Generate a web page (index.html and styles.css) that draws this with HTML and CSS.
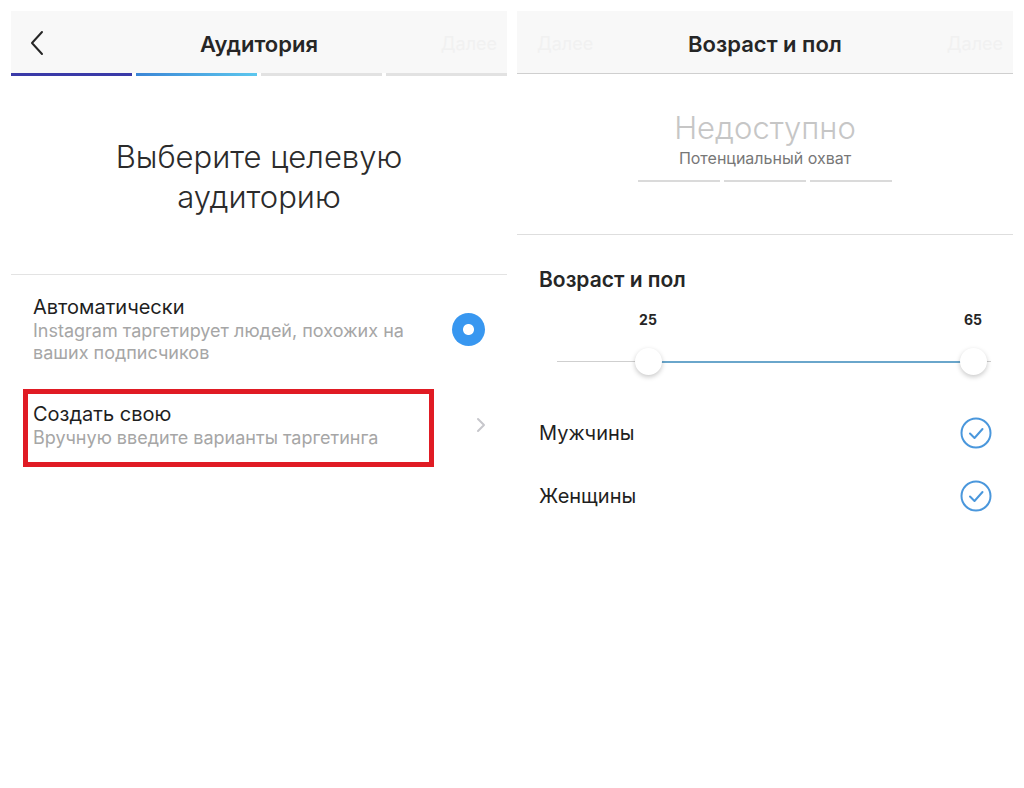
FILE: index.html
```html
<!DOCTYPE html>
<html lang="ru">
<head>
    <meta charset="UTF-8">
    <title>Аудитория</title>
    <link rel="stylesheet" href="styles.css">
</head>
<body>
    <div class="screens">
        <section class="screen">
            <header class="topbar">
                <span class="back">
                    <svg width="16" height="26" viewBox="0 0 16 26"><path d="M13 2 L3 13 L13 24" fill="none" stroke="#262626" stroke-width="2" stroke-linecap="round" stroke-linejoin="round"/></svg>
                </span>
                <h1>Аудитория</h1>
                <span class="ghost">Далее</span>
            </header>
            <div class="steps">
                <span class="step step-done"></span>
                <span class="step step-active"></span>
                <span class="step"></span>
                <span class="step"></span>
            </div>

            <h2 class="choose">Выберите целевую<br>аудиторию</h2>

            <div class="option">
                <div class="option-text">
                    <div class="option-title">Автоматически</div>
                    <div class="option-sub">Instagram таргетирует людей, похожих на ваших подписчиков</div>
                </div>
                <span class="radio"></span>
            </div>
            <div class="option option-custom">
                <div class="option-text highlight">
                    <div class="option-title">Создать свою</div>
                    <div class="option-sub">Вручную введите варианты таргетинга</div>
                </div>
                <svg class="chevron" width="10" height="16" viewBox="0 0 10 16"><path d="M2 2 L8 8 L2 14" fill="none" stroke="#c7c7cc" stroke-width="2" stroke-linecap="round" stroke-linejoin="round"/></svg>
            </div>
        </section>

        <section class="screen">
            <header class="topbar topbar-plain">
                <span class="ghost ghost-left">Далее</span>
                <h1>Возраст и пол</h1>
                <span class="ghost">Далее</span>
            </header>

            <div class="reach">
                <div class="reach-value">Недоступно</div>
                <div class="reach-label">Потенциальный охват</div>
                <div class="reach-bars">
                    <span></span><span></span><span></span>
                </div>
            </div>

            <div class="age">
                <h3>Возраст и пол</h3>
                <div class="range">
                    <span class="range-label" style="left: 109px">25</span>
                    <span class="range-label" style="left: 434px">65</span>
                    <div class="track">
                        <div class="track-fill" style="left: 91px; width: 325px"></div>
                    </div>
                    <span class="thumb" style="left: 109px"></span>
                    <span class="thumb" style="left: 434px"></span>
                </div>
            </div>

            <div class="gender">
                <span>Мужчины</span>
                <svg width="32" height="32" viewBox="0 0 32 32"><circle cx="16" cy="16" r="14.5" fill="none" stroke="#4a97dc" stroke-width="2"/><path d="M10 16.5 L14.5 21 L22.5 12" fill="none" stroke="#4a97dc" stroke-width="2" stroke-linecap="round" stroke-linejoin="round"/></svg>
            </div>
            <div class="gender">
                <span>Женщины</span>
                <svg width="32" height="32" viewBox="0 0 32 32"><circle cx="16" cy="16" r="14.5" fill="none" stroke="#4a97dc" stroke-width="2"/><path d="M10 16.5 L14.5 21 L22.5 12" fill="none" stroke="#4a97dc" stroke-width="2" stroke-linecap="round" stroke-linejoin="round"/></svg>
            </div>
        </section>
    </div>
</body>
</html>
```

FILE: styles.css
```css
* {
    margin: 0;
    padding: 0;
    box-sizing: border-box;
}

body {
    background: #ffffff;
    font-family: 'Inter', 'Roboto', sans-serif;
    color: #262626;
}

.screens {
    display: flex;
    gap: 10px;
    padding: 11px 11px 0 11px;
}

.screen {
    width: 496px;
}

/* top bar */
.topbar {
    height: 62px;
    background: #f8f8f8;
    display: flex;
    align-items: center;
    justify-content: center;
    position: relative;
}

.topbar-plain {
    border-bottom: 1px solid #cfcfcf;
    height: 63px;
}

.topbar h1 {
    font-size: 22px;
    font-weight: 600;
    color: #262626;
    margin-top: 4px;
}

.back {
    position: absolute;
    left: 18px;
    top: 19px;
}

.ghost {
    position: absolute;
    right: 10px;
    top: 22px;
    font-size: 18px;
    color: #f1f1f1;
}

.ghost-left {
    right: auto;
    left: 20px;
}

.steps {
    display: flex;
    gap: 4px;
    height: 3px;
}

.step {
    flex: 1;
    background: #e2e2e2;
}

.step-done {
    background: #3a3aa8;
}

.step-active {
    background: linear-gradient(to right, #3b86d6, #5cc7ee);
}

/* left screen */
.choose {
    font-size: 31px;
    font-weight: 300;
    line-height: 40px;
    text-align: center;
    color: #2b2b2b;
    padding: 61px 0 57px;
    border-bottom: 1px solid #e3e3e3;
}

.option {
    display: flex;
    align-items: center;
    justify-content: space-between;
    padding: 20px 22px 0 22px;
}

.option-text {
    width: 400px;
}

.option-title {
    font-size: 20px;
    color: #1f1f1f;
    line-height: 24px;
}

.option-sub {
    font-size: 18px;
    color: #a6a6a6;
    line-height: 22px;
    margin-top: 1px;
}

.radio {
    width: 33px;
    height: 33px;
    border-radius: 50%;
    background: radial-gradient(circle, #ffffff 0, #ffffff 5px, #3897f0 6px);
}

.option-custom {
    padding: 25px 21px 0 12px;
}

.highlight {
    border: 5px solid #e01b24;
    padding: 8px 5px 13px 5px;
    width: 411px;
}

.chevron {
    margin-top: -6px;
}

/* right screen */
.reach {
    text-align: center;
    padding: 36px 0 52px;
    border-bottom: 1px solid #dedede;
}

.reach-value {
    font-size: 31px;
    font-weight: 300;
    color: #c6c6c6;
    line-height: 36px;
}

.reach-label {
    font-size: 16px;
    color: #777777;
    line-height: 20px;
    margin-top: 2px;
}

.reach-bars {
    display: flex;
    justify-content: center;
    gap: 4px;
    margin-top: 12px;
}

.reach-bars span {
    width: 82px;
    height: 2px;
    background: #dadada;
}

.age {
    padding: 32px 22px 0 22px;
}

.age h3 {
    font-size: 21px;
    font-weight: 600;
    color: #262626;
    line-height: 26px;
}

.range {
    position: relative;
    height: 108px;
}

.range-label {
    position: absolute;
    top: 18px;
    transform: translateX(-50%);
    font-size: 14px;
    font-weight: 700;
    color: #262626;
}

.track {
    position: absolute;
    left: 18px;
    right: 0;
    top: 68px;
    height: 1px;
    background: #cfcfcf;
}

.track-fill {
    position: absolute;
    top: -0.5px;
    height: 2px;
    background: #6aa6cb;
}

.thumb {
    position: absolute;
    top: 55px;
    width: 27px;
    height: 27px;
    margin-left: -13px;
    border-radius: 50%;
    background: #ffffff;
    box-shadow: 0 2px 5px rgba(0, 0, 0, 0.22);
}

.gender {
    display: flex;
    align-items: center;
    justify-content: space-between;
    padding: 0 21px 0 22px;
    height: 63px;
    font-size: 20px;
    color: #1f1f1f;
}
```
